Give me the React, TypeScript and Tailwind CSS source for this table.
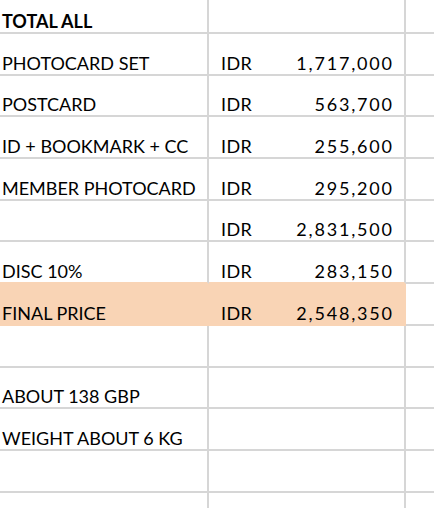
import React from 'react';

type Row = {
  label?: string;
  cur?: string;
  amount?: string;
  bold?: boolean;
  highlight?: boolean;
};

const rows: Row[] = [
  { label: 'TOTAL ALL', bold: true },
  { label: 'PHOTOCARD SET', cur: 'IDR', amount: '1,717,000' },
  { label: 'POSTCARD', cur: 'IDR', amount: '563,700' },
  { label: 'ID + BOOKMARK + CC', cur: 'IDR', amount: '255,600' },
  { label: 'MEMBER PHOTOCARD', cur: 'IDR', amount: '295,200' },
  { cur: 'IDR', amount: '2,831,500' },
  { label: 'DISC 10%', cur: 'IDR', amount: '283,150' },
  { label: 'FINAL PRICE', cur: 'IDR', amount: '2,548,350', highlight: true },
  {},
  { label: 'ABOUT 138 GBP' },
  { label: 'WEIGHT ABOUT 6 KG' },
  {},
  {},
];

export default function App() {
  return (
    <div
      className="w-[434px] h-[508px] overflow-hidden bg-white text-[18px] leading-none text-black"
      style={{ fontFamily: 'Lato, "Liberation Sans", sans-serif' }}
    >
      <div className="grid grid-cols-[209px_197px_1fr]">
        {rows.map((r, i) => {
          const h = i === 0 ? 'h-[34px]' : 'h-[41.7px]';
          const nextHi = rows[i + 1]?.highlight;
          const cellA = r.highlight
            ? 'bg-[#f9d4b5] border-[#f9d4b5]'
            : nextHi
              ? 'border-b-[#f9d4b5] border-r-[#d6d6d6]'
              : 'border-[#d6d6d6]';
          return (
            <React.Fragment key={i}>
              <div
                className={`${h} ${cellA} border-b-2 border-r-2 flex items-end pl-[2px] pb-[2px] whitespace-nowrap ${r.bold ? 'font-bold' : ''}`}
              >
                {r.label}
              </div>
              <div
                className={`${h} ${cellA} border-b-2 border-r-2 flex items-end justify-between pl-[12px] pr-[12px] pb-[2px]`}
              >
                <span className="tracking-[0.4px]">{r.cur}</span>
                <span className="tracking-[1.8px] mr-[-1.8px]">{r.amount}</span>
              </div>
              <div className={`${h} border-b-2 border-[#d6d6d6]`} />
            </React.Fragment>
          );
        })}
      </div>
    </div>
  );
}
